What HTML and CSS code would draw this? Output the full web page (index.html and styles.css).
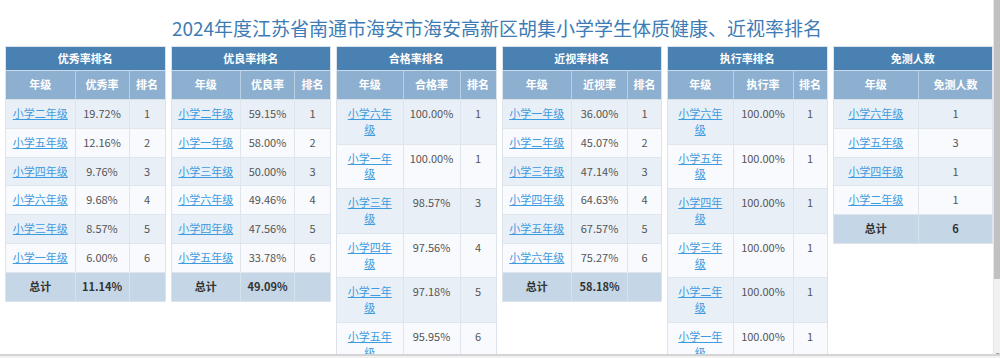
FILE: index.html
```html
<!DOCTYPE html>
<html lang="zh-CN">
<head>
<meta charset="utf-8">
<title>体质健康、近视率排名</title>
<link rel="stylesheet" href="styles.css">
</head>
<body>
<div class="page">
  <h1 class="title">2024年度江苏省南通市海安市海安高新区胡集小学学生体质健康、近视率排名</h1>
  <div class="grid">
    <div class="panel">
      <table class="tbl">
        <colgroup><col class="c69"><col class="c54"><col></colgroup>
        <thead>
          <tr><th colspan="3" class="cap">优秀率排名</th></tr>
          <tr class="hd"><th>年级</th><th>优秀率</th><th>排名</th></tr>
        </thead>
        <tbody>
          <tr><td><a href="#">小学二年级</a></td><td>19.72%</td><td>1</td></tr>
          <tr><td><a href="#">小学五年级</a></td><td>12.16%</td><td>2</td></tr>
          <tr><td><a href="#">小学四年级</a></td><td>9.76%</td><td>3</td></tr>
          <tr><td><a href="#">小学六年级</a></td><td>9.68%</td><td>4</td></tr>
          <tr><td><a href="#">小学三年级</a></td><td>8.57%</td><td>5</td></tr>
          <tr><td><a href="#">小学一年级</a></td><td>6.00%</td><td>6</td></tr>
        </tbody>
        <tfoot><tr><td>总计</td><td>11.14%</td><td></td></tr></tfoot>
      </table>
    </div>
    <div class="panel">
      <table class="tbl">
        <colgroup><col class="c69"><col class="c54"><col></colgroup>
        <thead>
          <tr><th colspan="3" class="cap">优良率排名</th></tr>
          <tr class="hd"><th>年级</th><th>优良率</th><th>排名</th></tr>
        </thead>
        <tbody>
          <tr><td><a href="#">小学二年级</a></td><td>59.15%</td><td>1</td></tr>
          <tr><td><a href="#">小学一年级</a></td><td>58.00%</td><td>2</td></tr>
          <tr><td><a href="#">小学三年级</a></td><td>50.00%</td><td>3</td></tr>
          <tr><td><a href="#">小学六年级</a></td><td>49.46%</td><td>4</td></tr>
          <tr><td><a href="#">小学四年级</a></td><td>47.56%</td><td>5</td></tr>
          <tr><td><a href="#">小学五年级</a></td><td>33.78%</td><td>6</td></tr>
        </tbody>
        <tfoot><tr><td>总计</td><td>49.09%</td><td></td></tr></tfoot>
      </table>
    </div>
    <div class="panel">
      <table class="tbl">
        <colgroup><col class="c66"><col class="c57"><col></colgroup>
        <thead>
          <tr><th colspan="3" class="cap">合格率排名</th></tr>
          <tr class="hd"><th>年级</th><th>合格率</th><th>排名</th></tr>
        </thead>
        <tbody>
          <tr><td><a href="#">小学六年级</a></td><td>100.00%</td><td>1</td></tr>
          <tr><td><a href="#">小学一年级</a></td><td>100.00%</td><td>1</td></tr>
          <tr><td><a href="#">小学三年级</a></td><td>98.57%</td><td>3</td></tr>
          <tr><td><a href="#">小学四年级</a></td><td>97.56%</td><td>4</td></tr>
          <tr><td><a href="#">小学二年级</a></td><td>97.18%</td><td>5</td></tr>
          <tr><td><a href="#">小学五年级</a></td><td>95.95%</td><td>6</td></tr>
        </tbody>
      </table>
    </div>
    <div class="panel">
      <table class="tbl">
        <colgroup><col class="c69"><col class="c56"><col></colgroup>
        <thead>
          <tr><th colspan="3" class="cap">近视率排名</th></tr>
          <tr class="hd"><th>年级</th><th>近视率</th><th>排名</th></tr>
        </thead>
        <tbody>
          <tr><td><a href="#">小学一年级</a></td><td>36.00%</td><td>1</td></tr>
          <tr><td><a href="#">小学二年级</a></td><td>45.07%</td><td>2</td></tr>
          <tr><td><a href="#">小学三年级</a></td><td>47.14%</td><td>3</td></tr>
          <tr><td><a href="#">小学四年级</a></td><td>64.63%</td><td>4</td></tr>
          <tr><td><a href="#">小学五年级</a></td><td>67.57%</td><td>5</td></tr>
          <tr><td><a href="#">小学六年级</a></td><td>75.27%</td><td>6</td></tr>
        </tbody>
        <tfoot><tr><td>总计</td><td>58.18%</td><td></td></tr></tfoot>
      </table>
    </div>
    <div class="panel">
      <table class="tbl">
        <colgroup><col class="c65"><col class="c60"><col></colgroup>
        <thead>
          <tr><th colspan="3" class="cap">执行率排名</th></tr>
          <tr class="hd"><th>年级</th><th>执行率</th><th>排名</th></tr>
        </thead>
        <tbody>
          <tr><td><a href="#">小学六年级</a></td><td>100.00%</td><td>1</td></tr>
          <tr><td><a href="#">小学五年级</a></td><td>100.00%</td><td>1</td></tr>
          <tr><td><a href="#">小学四年级</a></td><td>100.00%</td><td>1</td></tr>
          <tr><td><a href="#">小学三年级</a></td><td>100.00%</td><td>1</td></tr>
          <tr><td><a href="#">小学二年级</a></td><td>100.00%</td><td>1</td></tr>
          <tr><td><a href="#">小学一年级</a></td><td>100.00%</td><td>1</td></tr>
        </tbody>
      </table>
    </div>
    <div class="panel">
      <table class="tbl">
        <colgroup><col class="c85"><col></colgroup>
        <thead>
          <tr><th colspan="2" class="cap">免测人数</th></tr>
          <tr class="hd"><th>年级</th><th>免测人数</th></tr>
        </thead>
        <tbody>
          <tr><td><a href="#">小学六年级</a></td><td>1</td></tr>
          <tr><td><a href="#">小学五年级</a></td><td>3</td></tr>
          <tr><td><a href="#">小学四年级</a></td><td>1</td></tr>
          <tr><td><a href="#">小学二年级</a></td><td>1</td></tr>
        </tbody>
        <tfoot><tr><td>总计</td><td>6</td></tr></tfoot>
      </table>
    </div>
  </div>
</div>
<div class="vscroll"><div class="vthumb"></div><div class="varrow">▾</div></div>
<div class="hscroll"></div>
</body>
</html>
```

FILE: styles.css
```css
html, body {
  margin: 0;
  padding: 0;
  background: #ffffff;
  overflow: hidden;
}
body {
  font-family: "Noto Sans CJK SC", "Noto Sans", sans-serif;
  color: #555555;
}
.page {
  width: 994px;
}
.title {
  margin: 14px 0 0 0;
  height: 28px;
  line-height: 28px;
  font-size: 19px;
  font-weight: normal;
  text-align: center;
  color: #3d7cb4;
  white-space: nowrap;
}
.grid {
  display: grid;
  grid-template-columns: repeat(6, 1fr);
  column-gap: 5px;
  padding: 3.5px 1px 0 5px;
  align-items: start;
}
.panel {
  border: 1px solid #dde3ea;
  background: #ffffff;
}
.tbl {
  width: 100%;
  border-collapse: collapse;
  table-layout: fixed;
  font-size: 11px;
  line-height: 15.8px;
}
.c69 { width: 69px; }
.c66 { width: 66px; }
.c65 { width: 65px; }
.c85 { width: 85px; }
.c54 { width: 54px; }
.c56 { width: 56px; }
.c57 { width: 57px; }
.c60 { width: 60px; }
.tbl th,
.tbl td {
  padding: 6px 6px;
  text-align: center;
  vertical-align: top;
}
.tbl th {
  white-space: nowrap;
  padding-left: 1px;
  padding-right: 1px;
}
.tbl .cap {
  background: #4a81b3;
  color: #ffffff;
  font-weight: bold;
  padding-top: 4px;
  padding-bottom: 4px;
  border-bottom: 1px solid #c9d9e8;
}
.tbl .hd th {
  background: #8db0d0;
  color: #ffffff;
  font-weight: bold;
  border-left: 1px solid #bcd0e3;
  border-bottom: 1px solid #d6e1ec;
}
.tbl .hd th:first-child {
  border-left: none;
}
.tbl tbody td {
  border: 1px solid #dfe5ec;
  color: #555555;
}
.tbl tbody tr td:first-child { border-left: none; }
.tbl tbody tr td:last-child { border-right: none; }
.tbl tbody tr:nth-child(odd) td { background: #e9eff6; }
.tbl tbody tr:nth-child(even) td { background: #f8fafd; }
.tbl a {
  color: #3d9be0;
  text-decoration: underline;
}
.tbl tfoot td {
  background: #c5d7e6;
  color: #333333;
  font-weight: bold;
  border-left: 1px solid #d6e2ec;
  border-top: 1px solid #dfe5ec;
}
.tbl tfoot td:first-child { border-left: none; }
.vscroll {
  position: fixed;
  top: 0;
  right: 0;
  width: 6px;
  height: 355px;
  background: #f1f1f1;
  border-left: 1px solid #e6e6e6;
}
.vthumb {
  width: 100%;
  height: 279px;
  background: #c1c1c1;
}
.varrow {
  position: absolute;
  bottom: -3px;
  right: 0;
  font-size: 7px;
  line-height: 7px;
  color: #505050;
}
.hscroll {
  position: fixed;
  left: 0;
  right: 0;
  bottom: 0;
  height: 2px;
  border-top: 2px solid #d4d4d4;
  background: #f1f1f1;
}
```
